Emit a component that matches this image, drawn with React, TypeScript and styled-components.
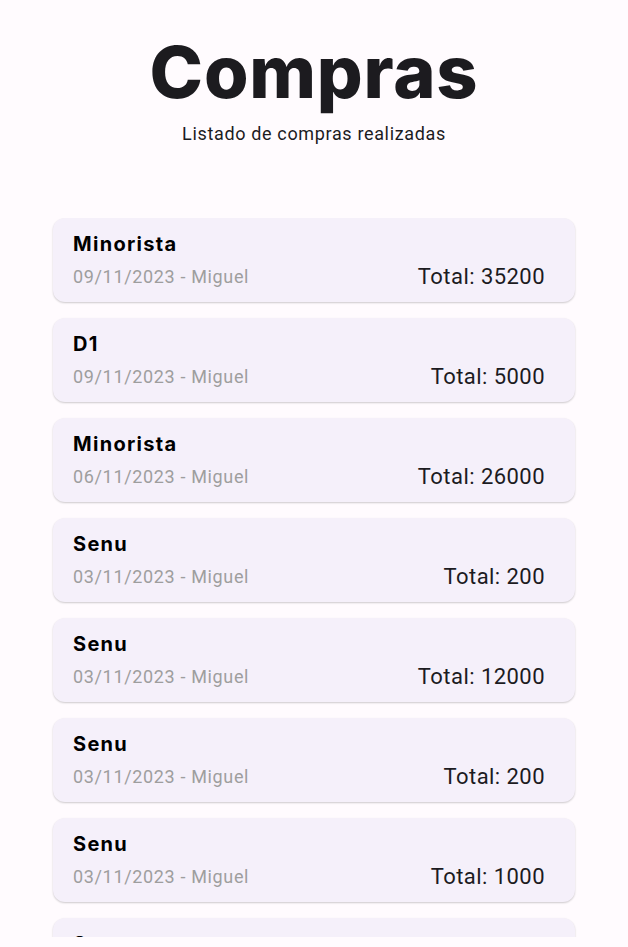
import React from "react";
import styled, { createGlobalStyle } from "styled-components";

const Global = createGlobalStyle`
  html, body { margin: 0; padding: 0; background: #fffbfe; }
  * { box-sizing: border-box; }
`;

const Page = styled.div`
  height: 947px;
  display: flex;
  flex-direction: column;
  padding-bottom: 10px;
  background: #fffbfe;
  font-family: Roboto, "Liberation Sans", sans-serif;
`;

const Header = styled.header`
  display: flex;
  flex-direction: column;
  align-items: center;
  padding-top: 30px;
  padding-bottom: 72px;
`;

const Title = styled.h1`
  margin: 0;
  font-family: Inter, "Noto Sans", sans-serif;
  font-weight: 800;
  font-size: 72px;
  line-height: 84px;
  color: #1c1b1f;
  letter-spacing: 0.8px;
`;

const Subtitle = styled.p`
  margin: 8px 0 0;
  font-size: 18px;
  line-height: 24px;
  color: #1c1b1f;
  letter-spacing: 0.65px;
`;

const List = styled.div`
  flex: 1;
  overflow: hidden;
  display: flex;
  flex-direction: column;
  gap: 16px;
  padding: 0 53px;
`;

const Card = styled.div`
  flex: none;
  height: 84px;
  background: #f5f0fa;
  border-radius: 12px;
  box-shadow: 0 1px 2px rgba(0, 0, 0, 0.2);
  padding: 9px 30px 9px 20px;
  display: flex;
  flex-direction: column;
`;

const CardTitle = styled.div`
  font-family: Inter, "Noto Sans", sans-serif;
  font-weight: 700;
  font-size: 20px;
  line-height: 34px;
  color: #000;
  letter-spacing: 1.3px;
`;

const Row = styled.div`
  display: flex;
  justify-content: space-between;
  align-items: flex-end;
`;

const Meta = styled.span`
  font-size: 18px;
  line-height: 32px;
  color: #9e9e9e;
  letter-spacing: 0.65px;
`;

const Total = styled.span`
  font-size: 22px;
  line-height: 32px;
  color: #1c1b1f;
  letter-spacing: 0.45px;
`;

const compras = [
  { name: "Minorista", date: "09/11/2023", user: "Miguel", total: 35200 },
  { name: "D1", date: "09/11/2023", user: "Miguel", total: 5000 },
  { name: "Minorista", date: "06/11/2023", user: "Miguel", total: 26000 },
  { name: "Senu", date: "03/11/2023", user: "Miguel", total: 200 },
  { name: "Senu", date: "03/11/2023", user: "Miguel", total: 12000 },
  { name: "Senu", date: "03/11/2023", user: "Miguel", total: 200 },
  { name: "Senu", date: "03/11/2023", user: "Miguel", total: 1000 },
  { name: "Senu", date: "03/11/2023", user: "Miguel", total: 500 },
];

export default function App() {
  return (
    <Page>
      <Global />
      <Header>
        <Title>Compras</Title>
        <Subtitle>Listado de compras realizadas</Subtitle>
      </Header>
      <List>
        {compras.map((c, i) => (
          <Card key={i}>
            <CardTitle>{c.name}</CardTitle>
            <Row>
              <Meta>
                {c.date} - {c.user}
              </Meta>
              <Total>Total: {c.total}</Total>
            </Row>
          </Card>
        ))}
      </List>
    </Page>
  );
}
